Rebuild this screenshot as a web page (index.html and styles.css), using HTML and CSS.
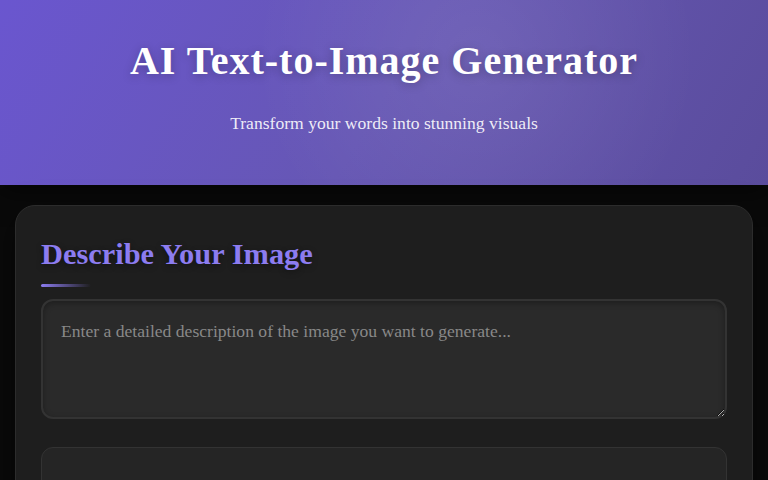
FILE: index.html
```html
<!DOCTYPE html>
<html lang="en">
<head>
    <meta charset="UTF-8">
    <meta name="viewport" content="width=device-width, initial-scale=1.0">
    <title>AI Text-to-Image Generator</title>
    <link rel="stylesheet" href="styles.css">
</head>
<body>

    <!-- Bandeau du haut -->
    <header class="hero">
        <h1>AI Text-to-Image Generator</h1>
        <p class="subtitle">Transform your words into stunning visuals</p>
    </header>

    <main class="container">
        <section class="card">
            <h2 class="section-title">Describe Your Image</h2>
            <textarea class="prompt-input" placeholder="Enter a detailed description of the image you want to generate..."></textarea>

            <div class="options-box"></div>
        </section>
    </main>

</body>
</html>
```

FILE: styles.css
```css
body {
    font-family: "Liberation Serif", "Times New Roman", serif;
    background-color: #0a0a0a;
    color: #e0e0e0;
    margin: 0;
    min-height: 100vh;
}

/* Bandeau violet */
.hero {
    height: 185px;
    box-sizing: border-box;
    padding-top: 37px;
    text-align: center;
    background:
        radial-gradient(circle at 62% 30%, rgba(255, 255, 255, 0.08), transparent 45%),
        linear-gradient(120deg, #6a56cf 0%, #6657b4 50%, #5a4c9c 100%);
    box-shadow: 0 6px 24px rgba(0, 0, 0, 0.5);
}

.hero h1 {
    margin: 0;
    font-size: 40px;
    font-weight: bold;
    letter-spacing: 1px;
    color: #fff;
    text-shadow: 0 2px 10px rgba(0, 0, 0, 0.25);
}

.subtitle {
    margin: 29px 0 0;
    font-size: 1.1rem;
    color: rgba(255, 255, 255, 0.9);
}

.container {
    padding: 20px 15px;
}

.card {
    background-color: #1e1e1e;
    border: 1px solid #2c2c2c;
    border-radius: 20px;
    padding: 25px 25px;
    box-shadow: 0 10px 30px rgba(0, 0, 0, 0.5);
}

.section-title {
    margin: 6px 0 0;
    font-size: 1.9rem;
    color: #8c7cf0;
    text-shadow: 0 2px 6px rgba(0, 0, 0, 0.4);
    position: relative;
    padding-bottom: 27px;
}

.section-title:after {
    content: '';
    position: absolute;
    left: 0;
    bottom: 12px;
    width: 50px;
    height: 3px;
    border-radius: 2px;
    background: linear-gradient(90deg, #8c7cf0, transparent);
}

.prompt-input {
    display: block;
    width: 100%;
    height: 120px;
    box-sizing: border-box;
    padding: 20px 18px;
    background-color: #2a2a2a;
    border: 2px solid #333;
    border-radius: 12px;
    color: #e0e0e0;
    font-family: inherit;
    font-size: 1.1rem;
    resize: vertical;
    box-shadow: inset 0 2px 6px rgba(0, 0, 0, 0.3);
}

.prompt-input::placeholder {
    color: #888;
}

.options-box {
    margin-top: 28px;
    height: 120px;
    background-color: #252525;
    border: 1px solid #333;
    border-radius: 12px;
}
```
